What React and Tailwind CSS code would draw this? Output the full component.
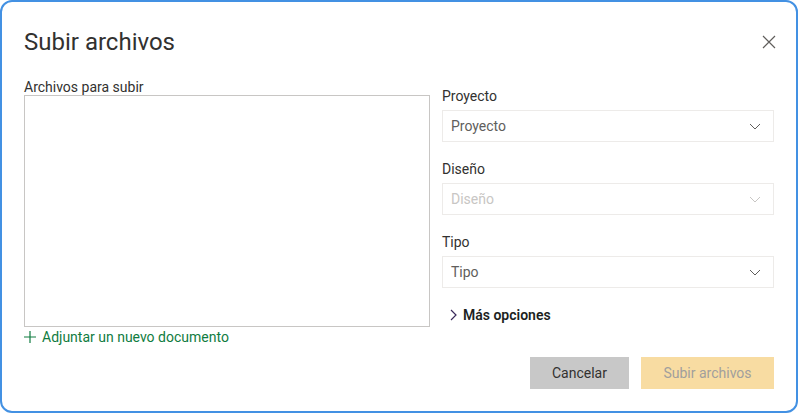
import React from "react";

const font = { fontFamily: "Roboto, 'Noto Sans', sans-serif" };

const ChevronDown = ({ className }) => (
  <svg width="12" height="7" viewBox="0 0 12 7" className={className}>
    <path d="M1 1l5 5 5-5" fill="none" stroke="currentColor" strokeWidth="1" />
  </svg>
);

const Field = ({ label, value, disabled }) => (
  <div className="flex flex-col">
    <label className="h-[20px] text-[14px] leading-[20px] text-[#323130]">{label}</label>
    <div className="mt-[4px] flex h-[32px] items-center justify-between border border-[#edebe9] pl-[8px] pr-[12px]">
      <span className={"text-[14px] " + (disabled ? "text-[#c8c6c4]" : "text-[#605e5c]")}>{value}</span>
      <ChevronDown className={disabled ? "text-[#c8c6c4]" : "text-[#605e5c]"} />
    </div>
  </div>
);

export default function App() {
  return (
    <div className="h-[413px] w-[798px] bg-white" style={font}>
      <div className="flex h-full w-full flex-col rounded-[12px] border-2 border-[#4391e3] px-[22px] pt-[20px]">
        <div className="flex h-[40px] items-center justify-between">
          <h1 className="text-[24px] leading-[32px] text-[#323130]">Subir archivos</h1>
          <button className="mr-[-2px] flex h-[14px] w-[14px] items-center justify-center text-[#605e5c]">
            <svg width="14" height="14" viewBox="0 0 14 14">
              <path d="M1 1l12 12M13 1L1 13" stroke="currentColor" strokeWidth="1.2" />
            </svg>
          </button>
        </div>

        <div className="mt-[14px] flex gap-[12px]">
          <div className="flex w-[406px] flex-col">
            <label className="h-[19px] overflow-visible text-[14px] leading-[22px] text-[#323130]">Archivos para subir</label>
            <div className="h-[232px] border border-[#c8c6c4]" />
            <button className="flex h-[20px] items-center gap-[6px] text-[14px] text-[#107c41]">
              <svg width="12" height="12" viewBox="0 0 12 12">
                <path d="M6 0v12M0 6h12" stroke="currentColor" strokeWidth="1.2" />
              </svg>
              Adjuntar un nuevo documento
            </button>
          </div>

          <div className="flex flex-1 flex-col gap-[17px] pt-[10px]">
            <Field label="Proyecto" value="Proyecto" />
            <Field label="Diseño" value="Diseño" disabled />
            <Field label="Tipo" value="Tipo" />
            <button className="flex h-[20px] items-center gap-[6px] pl-[8px] text-[14px] font-semibold text-[#201f1e]">
              <svg width="7" height="12" viewBox="0 0 7 12">
                <path d="M1 1l5 5-5 5" fill="none" stroke="#3b2b5b" strokeWidth="1.2" />
              </svg>
              Más opciones
            </button>
          </div>
        </div>

        <div className="mt-[10px] flex justify-end gap-[12px]">
          <button className="h-[32px] w-[99px] bg-[#c8c8c8] text-[14px] text-[#323130]">Cancelar</button>
          <button className="h-[32px] w-[133px] bg-[#f8dca2] text-[14px] text-[#a19f9d]">Subir archivos</button>
        </div>
      </div>
    </div>
  );
}
